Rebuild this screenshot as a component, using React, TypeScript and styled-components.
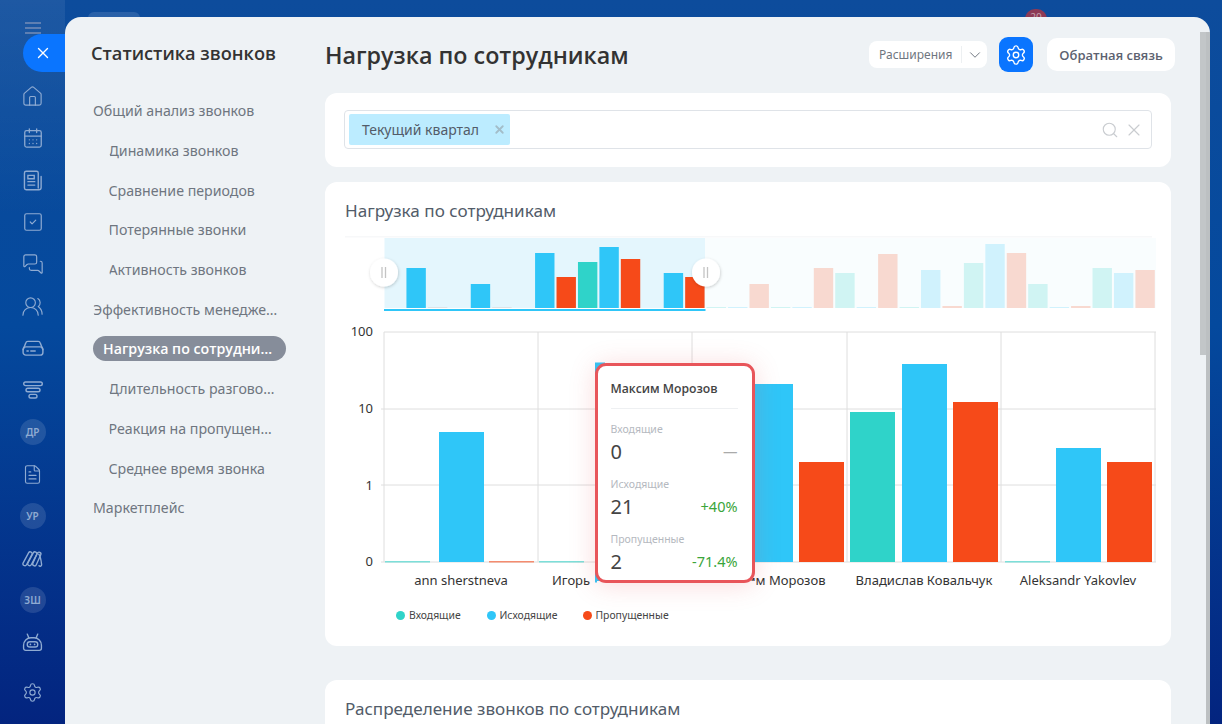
import React from 'react'
import styled, { createGlobalStyle } from 'styled-components'
import { CalendarDays, ChevronDown, House, FileText, MessagesSquare, Search, Settings, SquareCheck, UsersRound, X } from 'lucide-react'

const TEAL = '#2fd3c9'
const BLUE = '#2fc6f8'
const RED = '#f64a19'
const HEADING_FONT = '"Open Sans", "Noto Sans", sans-serif'

type Bar = { x: number; top: number; color: string }

// top edge of every bar in the overview strip, in order teal / blue / red per employee
const overview: [string, number][] = [
  [TEAL, 308], [BLUE, 268], [RED, 307], [TEAL, 308], [BLUE, 284], [RED, 307],
  [TEAL, 308], [BLUE, 253], [RED, 277], [TEAL, 262], [BLUE, 247], [RED, 259],
  [TEAL, 308], [BLUE, 273], [RED, 277], [TEAL, 307], [BLUE, 307], [RED, 284],
  [TEAL, 307], [BLUE, 307], [RED, 268], [TEAL, 273], [BLUE, 307], [RED, 254],
  [TEAL, 307], [BLUE, 270], [RED, 306], [TEAL, 263], [BLUE, 244], [RED, 253],
  [TEAL, 284], [BLUE, 307], [RED, 306], [TEAL, 268], [BLUE, 273], [RED, 270],
]

const mainBars: Bar[] = [
  { x: 385, top: 561, color: TEAL }, { x: 439, top: 432, color: BLUE }, { x: 489, top: 561, color: RED },
  { x: 539, top: 561, color: TEAL },
  { x: 696, top: 561, color: TEAL }, { x: 748, top: 384, color: BLUE }, { x: 799, top: 462, color: RED },
  { x: 850, top: 412, color: TEAL }, { x: 902, top: 364, color: BLUE }, { x: 953, top: 402, color: RED },
  { x: 1005, top: 561, color: TEAL }, { x: 1056, top: 448, color: BLUE }, { x: 1107, top: 462, color: RED },
]

const navItems = [
  { label: 'Общий анализ звонков' },
  { label: 'Динамика звонков', sub: true },
  { label: 'Сравнение периодов', sub: true },
  { label: 'Потерянные звонки', sub: true },
  { label: 'Активность звонков', sub: true },
  { label: 'Эффективность менеджеров' },
  { label: 'Нагрузка по сотрудникам', active: true },
  { label: 'Длительность разговоров', sub: true },
  { label: 'Реакция на пропущенные', sub: true },
  { label: 'Среднее время звонка', sub: true },
  { label: 'Маркетплейс' },
]

const DriveIcon = () => (
  <svg width="22" height="22" viewBox="0 0 20 20" fill="none" stroke="currentColor" strokeWidth="1.3" strokeLinecap="round">
    <path d="M1 11.5 3.4 5.4A2 2 0 0 1 5.3 4h9.4a2 2 0 0 1 1.9 1.4l2.4 6.1" />
    <rect x="1" y="9" width="18" height="7.5" rx="2.5" />
    <path d="M4.5 12.8h1.2M8 12.8h4" />
  </svg>
)

const NewsIcon = () => (
  <svg width="23" height="23" viewBox="0 0 20 20" fill="none" stroke="currentColor" strokeWidth="1.2" strokeLinecap="round">
    <path d="M15 16.5V3.5A1.5 1.5 0 0 0 13.500 2h-9A1.500 1.500 0 0 0 3 3.500v13A1.500 1.500 0 0 0 4.500 18h11a2 2 0 0 0 2-2V6.500" />
    <path d="M6 5.500h5.500v3H6zM6 11h6M6 14h6" />
  </svg>
)

const FunnelIcon = () => (
  <svg width="20" height="20" viewBox="0 0 20 20" fill="none" stroke="currentColor" strokeWidth="1.4">
    <rect x="0.700" y="2" width="18.600" height="3.600" rx="1.800" />
    <rect x="3" y="8.200" width="14" height="3.600" rx="1.800" />
    <rect x="6" y="14.400" width="8" height="3.600" rx="1.800" />
  </svg>
)

const WaveIcon = () => (
  <svg width="21" height="21" viewBox="0 0 20 20" fill="none" stroke="currentColor" strokeWidth="1.300" strokeLinejoin="round">
    <rect x="3.500" y="3" width="3.600" height="14.500" rx="1.800" transform="rotate(28 5.300 10.200)" />
    <rect x="8" y="3" width="3.600" height="14.500" rx="1.800" transform="rotate(28 9.800 10.200)" />
    <rect x="12.300" y="3.500" width="3.600" height="14" rx="1.800" transform="rotate(24 14.100 10.500)" />
    <path d="M15.500 5.500c1.500.6 2.800 7 3.200 10.300.2 1.700-2.300 2.200-2.800.7" />
  </svg>
)

const BotIcon = () => (
  <svg width="21" height="21" viewBox="0 0 20 20" fill="none" stroke="currentColor" strokeWidth="1.300" strokeLinecap="round">
    <path d="M5 2 6.500 5.500M15 2l-1.500 3.500" />
    <path d="M1.500 15.500v-3a7 7 0 0 1 7-7h3a7 7 0 0 1 7 7v3a2 2 0 0 1-2 2h-13a2 2 0 0 1-2-2Z" />
    <rect x="5" y="9.300" width="10" height="5" rx="2.500" />
    <path d="M8 11.800h.01M12 11.800h.01" strokeWidth="1.600" />
  </svg>
)

function RailIcons() {
  return (
    <>
      <RailItem $first><House size={23} strokeWidth={1.2} /></RailItem>
      <RailItem><CalendarDays size={22} strokeWidth={1.4} /></RailItem>
      <RailItem><NewsIcon /></RailItem>
      <RailItem><SquareCheck size={22} strokeWidth={1.3} /></RailItem>
      <RailItem><MessagesSquare size={22} strokeWidth={1.3} /></RailItem>
      <RailItem><UsersRound size={23} strokeWidth={1.2} /></RailItem>
      <RailItem><DriveIcon /></RailItem>
      <RailItem><FunnelIcon /></RailItem>
      <RailItem><Avatar>ДР</Avatar></RailItem>
      <RailItem><FileText size={21} strokeWidth={1.3} /></RailItem>
      <RailItem><Avatar>УР</Avatar></RailItem>
      <RailItem><WaveIcon /></RailItem>
      <RailItem><Avatar>ЗШ</Avatar></RailItem>
      <RailItem><BotIcon /></RailItem>
      <RailItem $bottom><Settings size={21} strokeWidth={1.3} /></RailItem>
    </>
  )
}

function Chart() {
  return (
    <ChartSvg viewBox="325 232 846 364">
      <rect x="345" y="236" width="807" height="1.500" fill="#f7f8f9" />
      <rect x="384.500" y="238" width="320.500" height="70" fill="#e4f6fd" />
      <rect x="705" y="238" width="451" height="70" fill="#f9fdfe" />
      {overview.map(([color, top], i) => (
        <rect
          key={i}
          x={385 + i * 21.44}
          y={top}
          width={19.400}
          height={308 - top}
          fill={i < 15 && top === 307 ? '#dfe3e6' : color}
          opacity={i < 15 ? 1 : 0.2}
        />
      ))}
      <rect x="384" y="309" width="321.500" height="2" fill={BLUE} />

      {[409, 485, 562].map(y => <line key={y} x1="381" x2="1156" y1={y} y2={y} stroke="#dedede" />)}
      <line x1="384" x2="1156" y1="332" y2="332" stroke="#dedede" />
      {[384, 538, 692, 847, 1001, 1155].map(x => <line key={x} x1={x} x2={x} y1="332" y2="562" stroke="#dedede" />)}

      {mainBars.map(b => (
        <rect key={b.x} x={b.x} y={b.top} width={45} height={b.top === 561 ? 1.500 : 562 - b.top} fill={b.color} opacity={b.top === 561 ? 0.6 : 1} />
      ))}
      {/* the hovered column sticks out behind the tooltip corners */}
      <rect x="595" y="362.500" width="10" height="220" fill={BLUE} />

      {[['100', 336], ['10', 413], ['1', 490], ['0', 566]].map(([t, y]) => (
        <AxisText key={t} x="373" y={y} textAnchor="end">{t}</AxisText>
      ))}
      <AxisText x="461" y="585" textAnchor="middle">ann sherstneva</AxisText>
      <AxisText x="552" y="585">Игорь</AxisText>
      <AxisText x="770.500" y="585" textAnchor="middle">Максим Морозов</AxisText>
      <AxisText x="924" y="585" textAnchor="middle">Владислав Ковальчук</AxisText>
      <AxisText x="1078" y="585" textAnchor="middle">Aleksandr Yakovlev</AxisText>
      {/* label tails that the tooltip hides */}
      <rect x="597" y="581" width="159" height="12" fill="#fff" />

      {[384, 706].map(x => (
        <g key={x}>
          <circle cx={x} cy="272.500" r="14" fill="#fff" filter="url(#knob)" />
          <path d={`M${x - 2} 267v11M${x + 1.500} 267v11`} stroke="#c4c4c4" strokeWidth="1.300" />
        </g>
      ))}
      <defs>
        <filter id="knob" x="-30%" y="-30%" width="160%" height="170%">
          <feDropShadow dx="0.500" dy="1" stdDeviation="1.500" floodColor="#000" floodOpacity="0.2" />
        </filter>
      </defs>
    </ChartSvg>
  )
}

export default function App() {
  return (
    <>
      <GlobalStyle />
      <Shell>
        <Rail>
          <Burger><span /><span /><span /></Burger>
          <CloseTab><X size={18} strokeWidth={1.8} /></CloseTab>
          <RailIcons />
        </Rail>
        <Main>
          <TopStrip>
            <TopPill />
            <TopBadge>20</TopBadge>
          </TopStrip>
          <Panel>
            <Sidebar>
              <SideTitle>Статистика звонков</SideTitle>
              <NavList>
                {navItems.map(item => (
                  <NavRow key={item.label}>
                    <NavLink $sub={item.sub} $active={item.active}>{item.label}</NavLink>
                  </NavRow>
                ))}
              </NavList>
            </Sidebar>
            <Content>
              <Header>
                <PageTitle>Нагрузка по сотрудникам</PageTitle>
                <HeaderActions>
                  <Extensions>
                    <span>Расширения</span>
                    <ExtensionsArrow><ChevronDown size={18} strokeWidth={1.3} /></ExtensionsArrow>
                  </Extensions>
                  <GearButton><Settings size={22} strokeWidth={1.5} /></GearButton>
                  <FeedbackButton>Обратная связь</FeedbackButton>
                </HeaderActions>
              </Header>

              <FilterCard>
                <FilterInput>
                  <Chip>
                    Текущий квартал
                    <X size={13} strokeWidth={3.4} color="#a3bdc9" />
                  </Chip>
                  <FilterTools>
                    <Search size={18} strokeWidth={1.5} />
                    <X size={20} strokeWidth={1.4} />
                  </FilterTools>
                </FilterInput>
              </FilterCard>

              <ChartCard>
                <CardTitle>Нагрузка по сотрудникам</CardTitle>
                <Chart />
                <Legend>
                  <LegendItem $color={TEAL} $width={90.500}>Входящие</LegendItem>
                  <LegendItem $color={BLUE} $width={96}>Исходящие</LegendItem>
                  <LegendItem $color={RED}>Пропущенные</LegendItem>
                </Legend>
                <Tooltip>
                  <TooltipName>Максим Морозов</TooltipName>
                  <TooltipLabel>Входящие</TooltipLabel>
                  <TooltipRow><span>0</span><TooltipDelta $muted>—</TooltipDelta></TooltipRow>
                  <TooltipLabel>Исходящие</TooltipLabel>
                  <TooltipRow><span>21</span><TooltipDelta>+40%</TooltipDelta></TooltipRow>
                  <TooltipLabel>Пропущенные</TooltipLabel>
                  <TooltipRow><span>2</span><TooltipDelta>-71.4%</TooltipDelta></TooltipRow>
                </Tooltip>
              </ChartCard>

              <NextCard>
                <CardTitle>Распределение звонков по сотрудникам</CardTitle>
              </NextCard>
            </Content>
            <ScrollTrack><ScrollThumb /></ScrollTrack>
          </Panel>
        </Main>
      </Shell>
    </>
  )
}

const GlobalStyle = createGlobalStyle`
  html, body { margin: 0; height: 100%; overflow: hidden; }
  body { font-family: "Noto Sans", "Open Sans", sans-serif; }
  * { box-sizing: border-box; }
`

const Shell = styled.div`
  display: flex;
  height: 724px;
  overflow: hidden;
  padding-right: 12px;
  background: linear-gradient(180deg, #0d4c9c 0%, #04499d 45%, #03247f 100%);
`

const Rail = styled.nav`
  flex: 0 0 65px;
  display: flex;
  flex-direction: column;
  align-items: center;
  padding-top: 22px;
  color: #8fabd2;
  background: linear-gradient(180deg, rgb(255 255 255 / 0.07) 0%, rgb(255 255 255 / 0) 30%);
`

const Burger = styled.div`
  display: flex;
  flex-direction: column;
  gap: 3px;
  width: 16px;
  height: 12px;
  span { height: 2px; background: #5e7fb2; }
`

const CloseTab = styled.div`
  align-self: flex-end;
  display: flex;
  align-items: center;
  justify-content: center;
  width: 42px;
  height: 38px;
  padding-right: 3px;
  color: #fff;
  background: #0a75ff;
  border-radius: 19px 0 0 19px;
`

const RailItem = styled.div<{ $bottom?: boolean; $first?: boolean }>`
  flex: 0 0 42px;
  display: flex;
  align-items: center;
  justify-content: center;
  margin-top: ${p => (p.$bottom ? '8px' : p.$first ? '3px' : '0')};
`

const Avatar = styled.div`
  display: flex;
  align-items: center;
  justify-content: center;
  width: 26px;
  height: 26px;
  font-size: 10px;
  font-weight: 600;
  border-radius: 50%;
  background: rgb(255 255 255 / 0.12);
`

const Main = styled.div`
  flex: 1;
  min-width: 0;
  display: flex;
  flex-direction: column;
`

const TopStrip = styled.div`
  flex: 0 0 17px;
  display: flex;
  align-items: flex-start;
  overflow: hidden;
`

const TopPill = styled.div`
  width: 52px;
  height: 20px;
  margin: 12px 0 0 23px;
  border-radius: 6px;
  background: rgb(255 255 255 / 0.12);
`

const TopBadge = styled.div`
  width: 22px;
  height: 20px;
  margin: 9px 0 0 885px;
  font-size: 10px;
  line-height: 16px;
  text-align: center;
  color: #c4a0ab;
  border-radius: 10px;
  background: #8d3a55;
`

const Panel = styled.div`
  position: relative;
  flex: 1;
  min-height: 0;
  display: flex;
  overflow: hidden;
  background: #eef2f5;
  border-radius: 16px 16px 0 0;
`

const Sidebar = styled.aside`
  flex: 0 0 260px;
  padding: 24px 0 0 26px;
`

const SideTitle = styled.div`
  font-family: ${HEADING_FONT};
  font-size: 18.200px;
  font-weight: 600;
  line-height: 24px;
  color: #333;
`

const NavList = styled.div`
  margin: 26px 0 0 2px;
`

const NavRow = styled.div`
  display: flex;
  align-items: center;
  height: 39.700px;
`

const NavLink = styled.div<{ $sub?: boolean; $active?: boolean }>`
  width: ${p => (p.$active ? '193px' : p.$sub ? '166px' : '186px')};
  margin-left: ${p => (p.$sub ? '15.500px' : '0')};
  padding: ${p => (p.$active ? '0 12px 0 10px' : '0')};
  font-family: ${p => (p.$active ? HEADING_FONT : 'inherit')};
  font-size: 14.200px;
  font-weight: ${p => (p.$active ? 600 : 400)};
  line-height: 25px;
  color: ${p => (p.$active ? '#fff' : '#6f7680')};
  background: ${p => (p.$active ? '#868d9a' : 'transparent')};
  border-radius: 13px;
  white-space: nowrap;
  overflow: hidden;
  text-overflow: ellipsis;
`

const Content = styled.main`
  flex: 1;
  min-width: 0;
  padding: 20px 39px 0 0;
`

const Header = styled.header`
  display: flex;
  align-items: center;
  justify-content: space-between;
  height: 35px;
  margin: 0 -4px 21px 0;
`

const PageTitle = styled.h1`
  margin: 0;
  font-family: ${HEADING_FONT};
  font-size: 23.300px;
  font-weight: 600;
  color: #333;
`

const HeaderActions = styled.div`
  display: flex;
  align-items: center;
`

const Extensions = styled.div`
  display: flex;
  align-items: center;
  width: 118px;
  height: 27px;
  padding-left: 10px;
  font-size: 12px;
  color: #6f7680;
  background: #fff;
  border-radius: 8px;
`

const ExtensionsArrow = styled.div`
  display: flex;
  align-items: center;
  justify-content: center;
  flex: 1;
  height: 17px;
  margin-left: 9px;
  border-left: 1px solid #edf0f2;
  color: #6f7680;
`

const GearButton = styled.div`
  display: flex;
  align-items: center;
  justify-content: center;
  width: 34px;
  height: 35px;
  margin: 0 14px 0 12px;
  color: #fff;
  background: #0a75ff;
  border-radius: 9px;
`

const FeedbackButton = styled.div`
  display: flex;
  align-items: center;
  justify-content: center;
  width: 128px;
  height: 33px;
  font-family: ${HEADING_FONT};
  font-size: 13px;
  font-weight: 600;
  color: #5c6270;
  background: #fff;
  border-radius: 10px;
`

const FilterCard = styled.section`
  height: 74px;
  padding: 17px 19px;
  background: #fff;
  border-radius: 12px;
`

const FilterInput = styled.div`
  display: flex;
  align-items: center;
  justify-content: space-between;
  height: 39px;
  padding: 0 7px 0 4px;
  border: 1px solid #dfe3e8;
  border-radius: 4px;
`

const Chip = styled.div`
  display: flex;
  align-items: center;
  justify-content: space-between;
  width: 161px;
  height: 31px;
  padding: 0 4px 0 13px;
  font-size: 14px;
  color: #535c69;
  background: #bcecff;
  border-radius: 2px;
`

const FilterTools = styled.div`
  display: flex;
  align-items: center;
  gap: 5px;
  color: #c9ccd0;
`

const ChartCard = styled.section`
  position: relative;
  height: 464px;
  margin-top: 15px;
  background: #fff;
  border-radius: 12px;
`

const NextCard = styled.section`
  height: 120px;
  margin-top: 34px;
  background: #fff;
  border-radius: 12px;
`

const CardTitle = styled.h2`
  margin: 0;
  padding: 16.500px 20px 0;
  height: 50px;
  font-size: 17.100px;
  font-weight: 400;
  line-height: 24px;
  color: #525c69;
`

const ChartSvg = styled.svg`
  display: block;
  width: 846px;
  height: 364px;
`

const AxisText = styled.text`
  font-family: "Noto Sans", "Open Sans", sans-serif;
  font-size: 13px;
  fill: #333;
`

const Legend = styled.div`
  display: flex;
  height: 38px;
  padding: 12px 0 0 71px;
`

const LegendItem = styled.div<{ $color: string; $width?: number }>`
  display: flex;
  align-items: center;
  gap: 4px;
  width: ${p => (p.$width ? `${p.$width}px` : 'auto')};
  height: 14px;
  font-size: 10.400px;
  color: #444;
  &::before {
    content: '';
    width: 9px;
    height: 9px;
    border-radius: 50%;
    background: ${p => p.$color};
  }
`

const Tooltip = styled.div`
  position: absolute;
  left: 269.500px;
  top: 180.500px;
  width: 160px;
  height: 220px;
  padding: 13px 14px 0 13px;
  background: #fff;
  border: 3.500px solid #e8555a;
  border-radius: 11px;
  box-shadow: 0 2px 26px rgb(232 85 90 / 0.22);
`

const TooltipName = styled.div`
  height: 30px;
  margin-bottom: 13px;
  font-family: ${HEADING_FONT};
  font-size: 12.200px;
  font-weight: 600;
  line-height: 20px;
  color: #444;
  border-bottom: 1px solid #eef0f2;
`

const TooltipLabel = styled.div`
  font-size: 10.500px;
  line-height: 14px;
  color: #b5b9c0;
`

const TooltipRow = styled.div`
  display: flex;
  align-items: center;
  justify-content: space-between;
  height: 27px;
  margin: 2px 0 12px;
  font-size: 20px;
  color: #444;
`

const TooltipDelta = styled.span<{ $muted?: boolean }>`
  font-size: 14.500px;
  color: ${p => (p.$muted ? '#aaa' : '#3aa53a')};
`

const ScrollTrack = styled.div`
  position: absolute;
  top: 15px;
  right: 0;
  bottom: 0;
  width: 10px;
  border-right: 4px solid #bcc0c2;
`

const ScrollThumb = styled.div`
  width: 6px;
  height: 323px;
  background: #c2c6c8;
`
